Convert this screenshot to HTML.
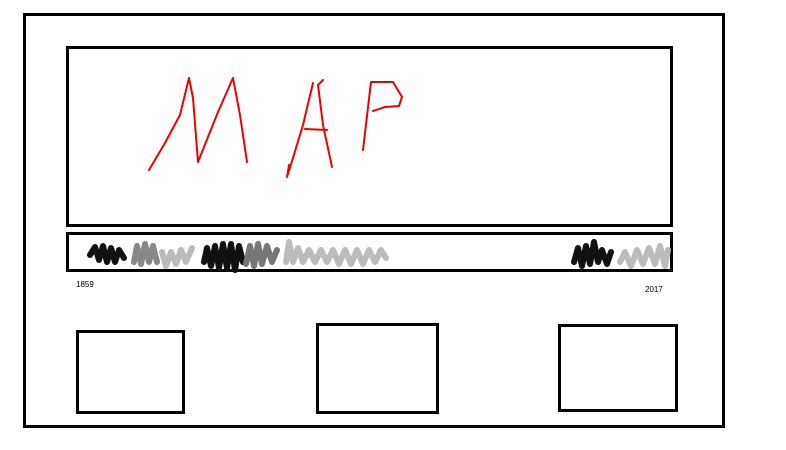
<!DOCTYPE html><html><head><style>
body{margin:0;width:786px;height:450px;background:#fff;position:relative;overflow:hidden;font-family:"Liberation Sans",sans-serif}
.b{position:absolute;border:3px solid #000;box-sizing:border-box}
.t{position:absolute;font-size:8px;color:#000}
</style></head><body>
<div class="b" style="left:23px;top:13px;width:702px;height:415px"></div>
<div class="b" style="left:66px;top:46px;width:607px;height:181px"></div>
<div class="b" style="left:66px;top:232px;width:607px;height:40px"></div>
<div class="t" style="left:76px;top:280px">1859</div>
<div class="t" style="left:645px;top:285px">2017</div>
<div class="b" style="left:76px;top:330px;width:109px;height:84px"></div>
<div class="b" style="left:316px;top:323px;width:123px;height:91px"></div>
<div class="b" style="left:558px;top:324px;width:120px;height:88px"></div>
<svg width="786" height="450" style="position:absolute;left:0;top:0" fill="none" stroke-linecap="round" stroke-linejoin="round">
<g stroke="#e00" stroke-width="2">
<polyline points="149,170 165,143 180,115 189,78 193,98 198,162 218,112 233,78 240,115 247,162"/>
<polyline points="313,83 303,125 293,158 287,177 289,165"/>
<polyline points="323,80 318,85 323,125 332,167"/>
<polyline points="305,129 327,130"/>
<polyline points="363,150 371,82 393,82 402,97 399,106 385,107 373,111"/>
</g>
<g stroke-width="6">
<polyline stroke="#111" points="90,255 95,247 99,260 103,246 107,262 111,248 115,262 119,250 124,258"/>
<polyline stroke="#888" points="134,262 137,246 141,264 145,244 149,262 153,246 157,262"/>
<polyline stroke="#bbb" points="162,252 166,266 171,252 176,264 181,250 186,262 192,248"/>
<polyline stroke="#111" points="204,262 207,248 211,266 215,246 219,268 223,244 227,268 231,244 235,270 239,246 243,262"/>
<polyline stroke="#777" points="246,264 250,246 254,266 258,244 262,264 267,246 272,262 277,250"/>
<polyline stroke="#bbb" points="286,262 289,242 293,262 298,248 303,262 309,250 315,262 321,250 327,262 333,250 339,264 345,250 351,264 357,250 363,264 369,250 375,262 381,250 386,258"/>
<polyline stroke="#111" points="574,262 578,248 582,266 586,246 590,264 594,242 598,262 602,250 607,264 611,252"/>
<polyline stroke="#bbb" points="620,262 625,252 631,266 637,250 643,264 649,248 655,264 660,246 665,266 668,250"/>
</g>
</svg>
</body></html>
